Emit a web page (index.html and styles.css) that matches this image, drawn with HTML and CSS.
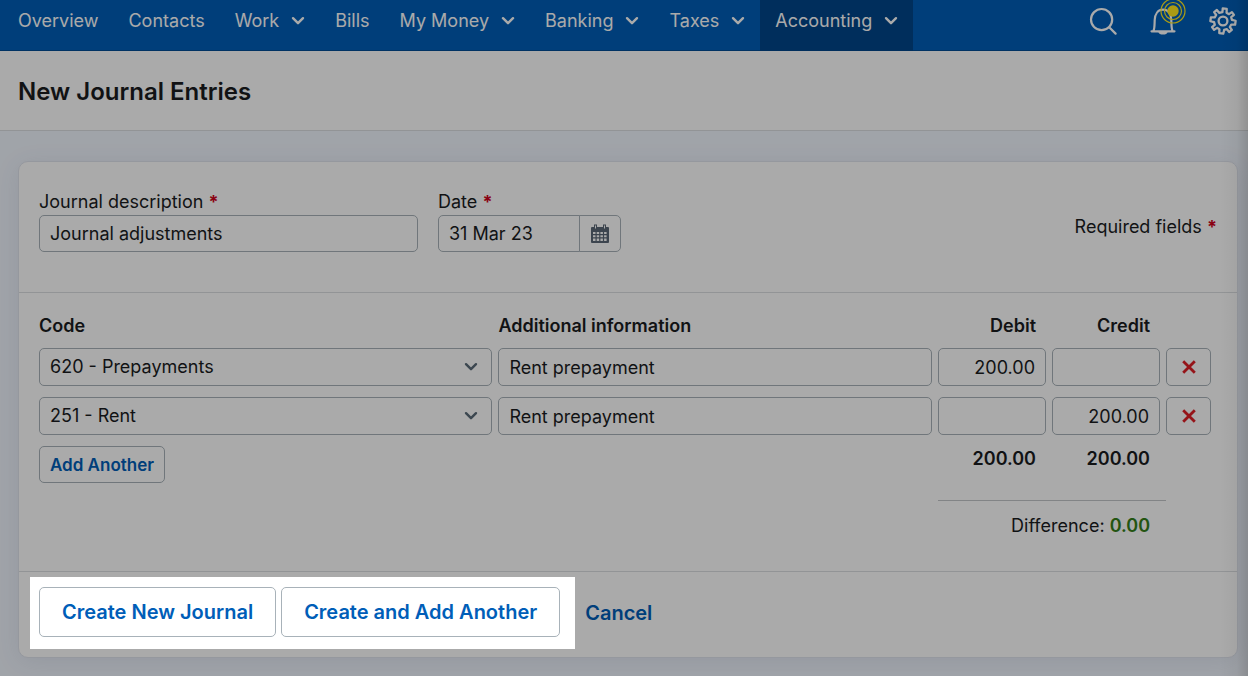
FILE: index.html
```html
<!DOCTYPE html>
<html lang="en">
<head>
    <meta charset="UTF-8">
    <meta name="viewport" content="width=device-width, initial-scale=1.0">
    <title>New Journal Entries</title>
    <link rel="stylesheet" href="styles.css">
</head>
<body>
    <svg class="symbols" aria-hidden="true">
        <symbol id="chevron" viewBox="0 0 14 10">
            <path d="M2 2.2l5 5 5-5" fill="none" stroke="currentColor" stroke-width="2.4" stroke-linecap="round" stroke-linejoin="round"/>
        </symbol>
        <symbol id="cross" viewBox="0 0 14 14">
            <path d="M2.2 2.2l9.600 9.600M11.800 2.200L2.200 11.800" fill="none" stroke="currentColor" stroke-width="2.8" stroke-linecap="square"/>
        </symbol>
    </svg>

    <nav class="navbar">
        <div class="nav-links">
            <a class="nav-link" href="#">Overview</a>
            <a class="nav-link" href="#">Contacts</a>
            <a class="nav-link" href="#">Work <svg class="chevron"><use href="#chevron"/></svg></a>
            <a class="nav-link" href="#">Bills</a>
            <a class="nav-link" href="#">My Money <svg class="chevron"><use href="#chevron"/></svg></a>
            <a class="nav-link" href="#">Banking <svg class="chevron"><use href="#chevron"/></svg></a>
            <a class="nav-link" href="#">Taxes <svg class="chevron"><use href="#chevron"/></svg></a>
            <a class="nav-link active" href="#">Accounting <svg class="chevron"><use href="#chevron"/></svg></a>
        </div>
        <div class="nav-icons">
            <button class="icon-button" type="button" aria-label="Search">
                <svg width="28" height="28" viewBox="0 0 28 28" fill="none" stroke="currentColor" stroke-width="2.2" stroke-linecap="round">
                    <circle cx="12.6" cy="12.6" r="10.6"/>
                    <path d="M20.2 20.2l6.4 6.4"/>
                </svg>
            </button>
            <button class="icon-button" type="button" aria-label="Notifications">
                <svg width="28" height="28" viewBox="0 0 28 28" fill="none" stroke="currentColor" stroke-width="2.2" stroke-linecap="round" stroke-linejoin="round">
                    <path d="M2.5 24.3h23M4.5 23.7c1.2-2 1-6 1.2-10.700C6 7 9 2.700 14 2.700s8 4.300 8.300 10.300c.2 4.700 0 8.700 1.200 10.700"/>
                    <path d="M10.500 25c.6 2 6.400 2 7 0z" fill="currentColor"/>
                </svg>
                <svg class="beacon" width="26" height="26" viewBox="0 0 26 26" fill="none" stroke="#ffe91f">
                    <circle cx="13" cy="13" r="12" stroke-width="1.2"/>
                    <circle cx="13" cy="13" r="8.500" stroke-width="1.2"/>
                    <circle cx="13" cy="13" r="5.700" fill="#ffe91f" stroke="none"/>
                </svg>
            </button>
            <button class="icon-button" type="button" aria-label="Settings">
                <svg width="28" height="28" viewBox="0 0 28 28" fill="none" stroke="currentColor" stroke-width="2.3" stroke-linejoin="round">
                    <circle cx="14" cy="14" r="4.400"/>
                    <path d="M12.200 5.300L12 1.500L16 1.500L16.400 5.300L19 6.400L21.600 4L24 6.400L21.600 9L22.700 11.600L26.500 12L26.500 16L22.700 16.400L21.600 19L24 21.600L21.600 24L19 21.600L16.400 22.700L16 26.500L12 26.500L11.600 22.700L9 21.600L6.400 24L4 21.600L6.400 19L5.300 16.400L1.500 16L1.500 12L5.300 11.600L6.400 9L4 6.400L6.400 4L9 6.400Z" transform="rotate(8 14 14)"/>
                </svg>
            </button>
        </div>
    </nav>

    <header class="page-header">
        <h1>New Journal Entries</h1>
    </header>

    <form class="card">
        <div class="details">
            <div class="form-group description">
                <label for="description">Journal description <span class="required">*</span></label>
                <input class="control" type="text" id="description" value="Journal adjustments">
            </div>
            <div class="form-group">
                <label for="date">Date <span class="required">*</span></label>
                <div class="date-picker">
                    <input class="control" type="text" id="date" value="31 Mar 23">
                    <button class="control date-button" type="button" aria-label="Choose date">
                        <svg width="18" height="20" viewBox="0 0 18 20">
                            <path d="M1 3h16a1 1 0 0 1 1 1v14a1 1 0 0 1-1 1H1a1 1 0 0 1-1-1V4a1 1 0 0 1 1-1z" fill="#5a6675"/>
                            <path d="M3 .5h3v5H3zM12 .5h3v5h-3z" fill="#5a6675"/>
                            <path d="M4 1.500h1v3H4zM13 1.500h1v3h-1z" fill="#fff"/>
                            <path d="M2 8h2.500v2H2zM5.700 8h2.500v2H5.700zM9.400 8h2.500v2H9.400zM13.100 8h2.500v2h-2.500zM2 11.300h2.500v2H2zM5.700 11.300h2.500v2H5.700zM9.400 11.300h2.500v2H9.400zM13.100 11.300h2.500v2h-2.500zM2 14.600h2.500v2.400H2zM5.700 14.600h2.500v2.400H5.700zM9.400 14.600h2.500v2.400H9.400zM13.100 14.600h2.500v2.400h-2.500z" fill="#fff"/>
                        </svg>
                    </button>
                </div>
            </div>
            <p class="required-note">Required fields <span class="required">*</span></p>
        </div>

        <div class="entries">
            <table class="entries-table">
                <thead>
                    <tr>
                        <th class="col-code">Code</th>
                        <th>Additional information</th>
                        <th class="col-amount amount">Debit</th>
                        <th class="col-amount amount">Credit</th>
                        <th class="col-delete"></th>
                    </tr>
                </thead>
                <tbody>
                    <tr>
                        <td>
                            <div class="select">
                                <select class="control" aria-label="Code"><option>620 - Prepayments</option><option>251 - Rent</option></select>
                                <svg class="chevron"><use href="#chevron"/></svg>
                            </div>
                        </td>
                        <td><input class="control" type="text" aria-label="Additional information" value="Rent prepayment"></td>
                        <td><input class="control amount" type="text" aria-label="Debit" value="200.00"></td>
                        <td><input class="control amount" type="text" aria-label="Credit"></td>
                        <td><button class="control delete" type="button" aria-label="Delete row"><svg><use href="#cross"/></svg></button></td>
                    </tr>
                    <tr>
                        <td>
                            <div class="select">
                                <select class="control" aria-label="Code"><option>251 - Rent</option><option>620 - Prepayments</option></select>
                                <svg class="chevron"><use href="#chevron"/></svg>
                            </div>
                        </td>
                        <td><input class="control" type="text" aria-label="Additional information" value="Rent prepayment"></td>
                        <td><input class="control amount" type="text" aria-label="Debit"></td>
                        <td><input class="control amount" type="text" aria-label="Credit" value="200.00"></td>
                        <td><button class="control delete" type="button" aria-label="Delete row"><svg><use href="#cross"/></svg></button></td>
                    </tr>
                </tbody>
                <tfoot>
                    <tr class="totals">
                        <td colspan="2"><button class="control add-row" type="button">Add Another</button></td>
                        <td class="amount">200.00</td>
                        <td class="amount">200.00</td>
                        <td></td>
                    </tr>
                    <tr class="difference">
                        <td colspan="2"></td>
                        <td class="amount" colspan="2">Difference: <strong>0.00</strong></td>
                        <td></td>
                    </tr>
                </tfoot>
            </table>
        </div>

        <div class="actions">
            <div class="spotlight">
                <button class="control action" type="submit">Create New Journal</button>
                <button class="control action" type="button">Create and Add Another</button>
            </div>
            <a class="cancel" href="#">Cancel</a>
        </div>
    </form>
    <div class="edge-shadow"></div>
</body>
</html>
```

FILE: styles.css
```css
* {
    box-sizing: border-box;
}
body {
    margin: 0;
    min-height: 100vh;
    overflow: hidden;
    background-color: #f1f6fe;
    color: #1a1c1e;
    font-family: Inter, "Liberation Sans", sans-serif;
    font-size: 18px;
    line-height: 24px;
}
.symbols {
    display: none;
}
.chevron {
    width: 14px;
    height: 10px;
}

/* navigation */
.navbar {
    display: flex;
    justify-content: space-between;
    height: 51px;
    padding: 0 11px 0 3px;
    background-color: #005eb8;
    border-bottom: 1px solid #004c95;
}
.nav-links {
    display: flex;
}
.nav-link {
    display: flex;
    align-items: center;
    gap: 12px;
    height: 51px;
    padding: 0 15px 9px;
    color: #fff;
    text-decoration: none;
}
.nav-link.active {
    background-color: #00458a;
}
.nav-icons {
    display: flex;
    align-items: center;
    gap: 32px;
    padding-bottom: 8px;
}
.icon-button {
    position: relative;
    display: flex;
    padding: 0;
    background: none;
    border: none;
    color: #fff;
}
.beacon {
    position: absolute;
    top: -9px;
    right: -9px;
}

/* page title */
.page-header {
    padding: 25px 18px 22px;
    background-color: #fff;
    border-bottom: 1px solid #dcdfe2;
}
h1 {
    margin: 0;
    font-size: 24px;
    font-weight: 600;
    line-height: 32px;
}

/* form controls */
.control {
    display: block;
    width: 100%;
    height: 38px;
    padding: 0 10px;
    background-color: #fff;
    border: 1px solid #a8b2b9;
    border-radius: 5px;
    color: inherit;
    font: inherit;
}
.required {
    color: #d0021b;
    font-weight: 700;
}
.amount {
    text-align: right;
}
.select {
    position: relative;
}
.select select {
    appearance: none;
}
.select .chevron {
    position: absolute;
    top: 14px;
    right: 14px;
    color: #5a6b78;
    pointer-events: none;
}

/* card */
.card {
    margin: 30px 10px 18px 18px;
    background-color: #fff;
    border: 1px solid #e0e4ee;
    border-radius: 10px;
    box-shadow: 0 4px 24px rgba(70, 80, 120, 0.1);
}
.details {
    display: flex;
    align-items: flex-start;
    gap: 20px;
    padding: 28px 20px 40px;
    border-bottom: 1px solid #dcdfe2;
}
.details label {
    display: block;
    margin-bottom: 1px;
}
.details .control {
    height: 37px;
}
.description {
    width: 379px;
}
.date-picker {
    display: flex;
}
.date-picker input {
    width: 142px;
    border-radius: 5px 0 0 5px;
}
.date-picker .date-button {
    display: flex;
    align-items: center;
    justify-content: center;
    width: 42px;
    margin-left: -1px;
    border-radius: 0 5px 5px 0;
}
.required-note {
    margin: 25px 0 0 auto;
}

/* journal lines */
.entries {
    padding: 21px 26px 22px 20px;
    border-bottom: 1px solid #dcdfe2;
}
.entries-table {
    width: 100%;
    table-layout: fixed;
    border-collapse: collapse;
}
.entries-table th,
.entries-table td {
    padding: 0 6px 11px 0;
    text-align: left;
    vertical-align: top;
}
.entries-table th {
    padding-bottom: 10px;
    font-weight: 600;
}
.entries-table th:last-child,
.entries-table td:last-child {
    padding-right: 0;
}
.entries-table th.amount,
.entries-table td.amount {
    padding-right: 16px;
    text-align: right;
}
.col-code {
    width: 39.2%;
}
.col-amount {
    width: 114px;
}
.col-delete {
    width: 45px;
}
.control.delete {
    display: flex;
    align-items: center;
    justify-content: center;
    color: #e01f26;
}
.delete svg {
    width: 14px;
    height: 14px;
}
.control.add-row {
    width: auto;
    height: 37px;
    color: #005eb8;
    font-size: 17px;
    font-weight: 600;
}
.totals .amount {
    font-weight: 600;
}
.entries-table .totals td {
    padding-bottom: 17px;
}
.entries-table .totals .amount {
    padding-top: 1px;
}
.entries-table .difference td {
    padding-top: 13px;
}
.difference .amount {
    border-top: 1px solid #c3c6c9;
}
.difference strong {
    color: #35801a;
    font-weight: 600;
}

/* actions */
.actions {
    display: flex;
    align-items: center;
    gap: 10px;
    padding: 5px 11px 8px;
    font-size: 20px;
    font-weight: 600;
}
/* everything outside of the highlighted buttons is dimmed */
.spotlight {
    position: relative;
    z-index: 1;
    display: flex;
    gap: 5px;
    padding: 10px 15px 12px 9px;
    box-shadow: 0 0 0 2000px rgba(0, 0, 0, 0.333);
}
.action {
    width: auto;
    height: 50px;
    padding: 0 22px;
    color: #005eb8;
}
.cancel {
    color: #005eb8;
    text-decoration: none;
}
.edge-shadow {
    position: absolute;
    z-index: 2;
    top: 0;
    right: 0;
    bottom: 0;
    width: 28px;
    background: linear-gradient(to right, rgba(0, 0, 0, 0), rgba(0, 0, 0, 0.04) 60%, rgba(0, 0, 0, 0.14));
    pointer-events: none;
}
```
